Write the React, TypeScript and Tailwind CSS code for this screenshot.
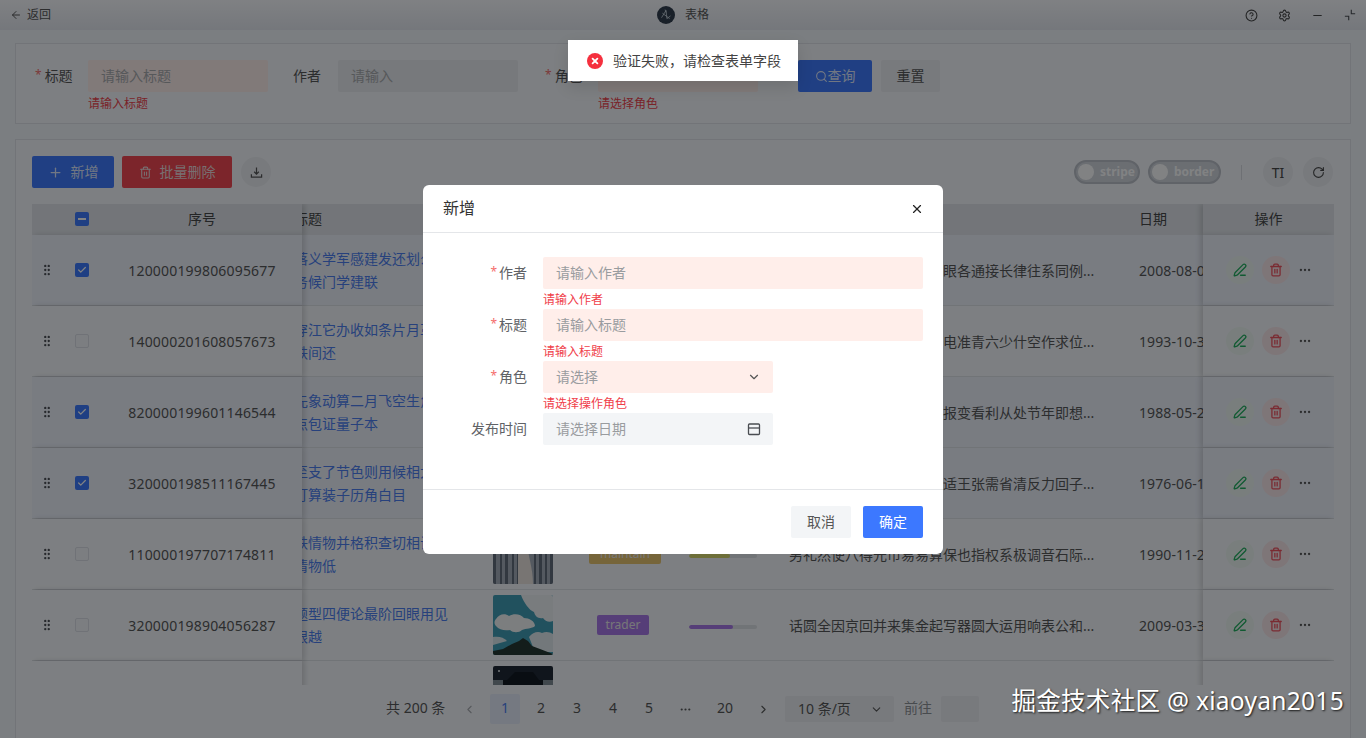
import { ArrowLeft, CircleHelp, Settings, Minus, Plus, Trash2, Search, RotateCw, PenLine, Ellipsis, ChevronDown, ChevronLeft, ChevronRight, X, GripVertical, Check } from "lucide-react";

type Row = { id: string; selected: boolean; t1: string; t2: string; desc: string; date: string; tag: string; tagCls: string; tagPad: string; fill: string; bar: string; photo: string };

const rows: Row[] = [
  { id: "120000199806095677", selected: true, t1: "落义学军感建发还划么", t2: "务候门学建联", desc: "话题任务以上程度合理大眼各通接长律往系同例...", date: "2008-08-06", tag: "admin", tagCls: "w-[52px] bg-[#6a9cff]", tagPad: "pl-[4px]", fill: "w-[40px]", bar: "bg-[#6a9cff]", photo: "plain" },
  { id: "140000201608057673", selected: false, t1: "穿江它办收如条片月革", t2: "铁间还", desc: "话题任务以上程度合理大电准青六少什空作求位...", date: "1993-10-31", tag: "admin", tagCls: "w-[52px] bg-[#6a9cff]", tagPad: "pl-[4px]", fill: "w-[40px]", bar: "bg-[#6a9cff]", photo: "plain" },
  { id: "820000199601146544", selected: true, t1: "先象动算二月飞空生角", t2: "点包证量子本", desc: "话题任务以上程度合理大报变看利从处节年即想...", date: "1988-05-23", tag: "admin", tagCls: "w-[52px] bg-[#6a9cff]", tagPad: "pl-[4px]", fill: "w-[40px]", bar: "bg-[#6a9cff]", photo: "plain" },
  { id: "320000198511167445", selected: true, t1: "至支了节色则用候相大", t2: "打算装子历角白目", desc: "话题任务以上程度合理大适王张需省清反力回子...", date: "1976-06-17", tag: "admin", tagCls: "w-[52px] bg-[#6a9cff]", tagPad: "pl-[4px]", fill: "w-[40px]", bar: "bg-[#6a9cff]", photo: "plain" },
  { id: "110000197707174811", selected: false, t1: "铁情物并格积查切相试", t2: "情物低", desc: "男礼然使八得元市易易算保也指权系极调音石际...", date: "1990-11-25", tag: "maintain", tagCls: "w-[72px] bg-[#e8c46c]", tagPad: "pl-[8px]", fill: "w-[41px]", bar: "bg-[#d8d86a]", photo: "curtain" },
  { id: "320000198904056287", selected: false, t1: "题型四便论最阶回眼用见", t2: "眼越", desc: "话圆全因京回并来集金起写器圆大运用响表公和...", date: "2009-03-31", tag: "trader", tagCls: "w-[52px] bg-[#a876e8]", tagPad: "pl-[4px]", fill: "w-[44px]", bar: "bg-[#a876e8]", photo: "sky" },
  { id: "", selected: false, t1: "下降和厂边业发不级老开", t2: "", desc: "", date: "", tag: "", tagCls: "", tagPad: "", fill: "", bar: "", photo: "dark" },
];

function Photo({ kind }: { kind: string }) {
  if (kind === "sky") {
    return (
      <svg viewBox="0 0 60 60" className="w-[60px] h-[60px] rounded-[2px] block">
        <rect width="60" height="60" fill="#3f9db5" />
        <path d="M28 0h32v26c-4 2-8 0-10-3-5 1-8-2-9-6-5-2-10-9-13-17z" fill="#eef2f5" />
        <path d="M3 24c3-5 9-6 13-3 5-3 12-2 15 2 5 0 11 3 11 8-3 3-9 2-13 4-3 3-9 3-12 0-5 1-11 0-14-4-2-2-2-5 0-7z" fill="#f5f6f7" />
        <path d="M36 42c4-5 9-6 13-4 4-2 8-1 11 1v18H42z" fill="#e3ebee" />
        <path d="M0 42c5-1 11 0 14 4l-14 4z" fill="#dbe8ec" />
        <path d="M0 60v-4l10-2 9-5 7-3 4-3 5 3 4 5 8 3 13 5v1z" fill="#22352f" />
      </svg>
    );
  }
  if (kind === "curtain") {
    return (
      <svg viewBox="0 0 60 60" className="w-[60px] h-[60px] rounded-[2px] block">
        <rect width="60" height="60" fill="#a5adb9" />
        <path d="M0 0h3v60H0zM7 0h2v60H7zM12 0h3v60h-3zM19 0h2v60h-2zM24 0h1v60h-1zM41 0h2v60h-2zM46 0h3v60h-3zM52 0h2v60h-2zM57 0h3v60h-3z" fill="#606a78" />
        <path d="M25 60V24c0-8 2-16 5-16s5 8 5 16 5 20 5 36z" fill="#ece5de" />
      </svg>
    );
  }
  if (kind === "dark") {
    return (
      <svg viewBox="0 0 60 60" className="w-[60px] h-[60px] rounded-[2px] block">
        <rect width="60" height="60" fill="#1c2430" />
        <path d="M0 14h14l8-8h18l6 8h14v46H0z" fill="#0f141c" />
        <path d="M0 14h10v6H0zM50 14h10v6H50z" fill="#7f8a92" />
        <circle cx="6" cy="5" r="1" fill="#e8eef2" />
      </svg>
    );
  }
  return <div className="w-[60px] h-[60px] rounded-[2px] bg-[#9fb2c4]" />;
}

function Box({ on }: { on: boolean }) {
  return on ? (
    <span className="w-[14px] h-[14px] rounded-[2px] bg-[#3b78ff] flex items-center justify-center">
      <Check size={10} strokeWidth={3} className="text-white" />
    </span>
  ) : (
    <span className="w-[14px] h-[14px] rounded-[2px] border border-[#dcdfe6] bg-[#f4f6fa]" />
  );
}

function Switch({ label, w }: { label: string; w: string }) {
  return (
    <div className={`${w} h-[24px] rounded-full bg-[#d2d6dd] border-[2px] border-[#bcc0c8] flex items-center pl-[2px] gap-[6px]`}>
      <span className="w-[16px] h-[16px] rounded-full bg-white shrink-0" />
      <span className="text-[12px] font-bold text-white leading-none">{label}</span>
    </div>
  );
}

function Calendar() {
  return (
    <svg viewBox="0 0 14 14" className="w-[14px] h-[14px]" fill="none" stroke="#4a4d52" strokeWidth="1.3">
      <rect x="1.5" y="2" width="11" height="10.5" rx="1" />
      <path d="M1.5 6h11" />
    </svg>
  );
}

function Logo() {
  return (
    <svg viewBox="0 0 20 20" className="w-[18px] h-[18px]">
      <circle cx="10" cy="10" r="10" fill="#2e3b4a" />
      <path d="M5 13l5-8 1 9 4-3M6 8l8 6M9 4l1 3" fill="none" stroke="#c9d3dc" strokeWidth="0.9" />
    </svg>
  );
}

function Shrink() {
  return (
    <svg viewBox="0 0 14 14" className="w-[12px] h-[12px]" fill="none" stroke="#4a4d52" strokeWidth="1.3">
      <path d="M8.5 1v4.5H13M1 8.5h4.5V13" />
    </svg>
  );
}

function FormRow({ label, required, error, ph, wide, icon }: { label: string; required?: boolean; error?: string; ph: string; wide?: boolean; icon?: React.ReactNode }) {
  return (
    <div className="flex mb-[20px] h-[32px]">
      <div className="w-[120px] pr-[16px] h-[32px] pb-[2px] flex items-center justify-end text-[14px] text-[#606266] shrink-0">
        {required && <span className="text-[#f56c6c] text-[12px] mr-[2px] leading-none">*</span>}
        {label}
      </div>
      <div className="flex flex-col flex-1">
        <div className={`${wide ? "w-[380px]" : "w-[230px]"} h-[32px] shrink-0 rounded-[2px] ${error ? "bg-[#ffeeea]" : "bg-[#f3f5f7]"} pl-[13px] pr-[12px] flex items-center justify-between text-[14px] text-[#999c9f]`}>
          <span className="pb-[2px]">{ph}</span>
          {icon}
        </div>
        {error && <div className="text-[12px] text-[#f0404a] leading-[22px] h-[20px]">{error}</div>}
      </div>
    </div>
  );
}

export default function App() {
  const fixedL = "relative z-10 w-[270px] shrink-0 flex items-center shadow-[3px_0_5px_rgba(0,0,0,0.14)]";
  const fixedR = "relative z-10 w-[131px] shrink-0 flex items-center shadow-[-3px_0_5px_rgba(0,0,0,0.14)]";
  const pageText = "pb-[4px]";
  return (
    <div className="relative w-[1366px] h-[738px] overflow-hidden bg-[#f3f6fb] text-[14px] text-[#555] [font-family:'Noto_Sans','Noto_Sans_CJK_SC',sans-serif]">
      {/* top bar */}
      <div className="h-[30px] flex items-center bg-linear-to-b from-[#fbfcff] to-[#e6e9f0] relative">
        <div className="w-[657px] pl-[10px] flex items-center gap-[5px] text-[12px] text-[#555]">
          <ArrowLeft size={12} />
          <span>返回</span>
        </div>
        <div className="flex items-center gap-[10px] text-[12px] text-[#555]">
          <Logo />
          <span>表格</span>
        </div>
        <div className="flex-1 flex items-center justify-end gap-[20px] pr-[10px] text-[#444]">
          <CircleHelp size={13} />
          <Settings size={13} />
          <Minus size={13} />
          <Shrink />
        </div>
      </div>

      <div className="px-[15px] pt-[13px]">
        {/* search card */}
        <div className="h-[81px] bg-[#f7f9fc] border border-[#e0e3e8] pt-[16px] pl-[19px] flex items-start">
          <div className="flex items-center h-[32px] pb-[2px] w-[37px] mr-[16px] whitespace-nowrap">
            <span className="text-[#f56c6c] text-[12px] mr-[3px]">*</span>标题
          </div>
          <div className="w-[180px]">
            <div className="h-[32px] pb-[2px] bg-[#ffeeea] rounded-[2px] pl-[13px] flex items-center text-[#a8aaad]">请输入标题</div>
            <div className="text-[12px] text-[#f0404a] leading-[24px]">请输入标题</div>
          </div>
          <div className="ml-[25px] w-[28px] h-[32px] pb-[2px] mr-[17px] flex items-center whitespace-nowrap">作者</div>
          <div className="w-[180px] h-[32px] pb-[2px] bg-[#eaecf0] rounded-[2px] pl-[13px] flex items-center text-[#a8aaad]">请输入</div>
          <div className="ml-[27px] w-[37px] mr-[16px] h-[32px] pb-[2px] flex items-center whitespace-nowrap">
            <span className="text-[#f56c6c] text-[12px] mr-[3px]">*</span>角色
          </div>
          <div className="w-[160px]">
            <div className="h-[32px] bg-[#ffeeea] rounded-[2px]" />
            <div className="text-[12px] text-[#f0404a] leading-[24px]">请选择角色</div>
          </div>
          <div className="ml-[40px] w-[74px] h-[32px] rounded-[2px] bg-[#3c78ff] text-[#dfe8ff] flex items-center justify-center">
            <Search size={13} />
            <span className="pb-[2px]">查询</span>
          </div>
          <div className="ml-[9px] w-[59px] h-[32px] pb-[2px] rounded-[2px] bg-[#eceef2] flex items-center justify-center">重置</div>
        </div>

        {/* table card */}
        <div className="mt-[15px] h-[640px] bg-[#f7f9fc] border border-[#e0e3e8] pt-[16px] px-[16px]">
          <div className="h-[32px] flex items-center">
            <div className="w-[82px] h-[32px] rounded-[2px] bg-[#3c78ff] text-[#dfe8ff] flex items-center justify-center gap-[8px]">
              <Plus size={15} />
              <span className="pb-[2px]">新增</span>
            </div>
            <div className="ml-[8px] w-[110px] h-[32px] rounded-[2px] bg-[#f4454f] text-[#ecd8da] flex items-center justify-center gap-[8px]">
              <Trash2 size={13} />
              <span className="pb-[2px]">批量删除</span>
            </div>
            <div className="ml-[9px] w-[30px] h-[30px] rounded-full bg-[#eceef2] flex items-center justify-center">
              <svg viewBox="0 0 14 14" className="w-[13px] h-[13px]" fill="none" stroke="#555" strokeWidth="1.3">
                <path d="M7 1.5v7M4.5 6.2 7 8.7l2.5-2.5M1.5 9v3h11V9" />
              </svg>
            </div>
            <div className="flex-1" />
            <Switch label="stripe" w="w-[66px]" />
            <div className="ml-[8px]">
              <Switch label="border" w="w-[73px]" />
            </div>
            <div className="ml-[20px] w-px h-[15px] bg-[#d8dbe0]" />
            <div className="ml-[21px] w-[30px] h-[30px] rounded-full bg-[#eceef2] flex items-center justify-center text-[14px] text-[#444]">TI</div>
            <div className="ml-[10px] w-[30px] h-[30px] rounded-full bg-[#eceef2] flex items-center justify-center">
              <RotateCw size={13} className="text-[#444]" />
            </div>
            <div className="w-[1px]" />
          </div>

          {/* table */}
          <div className="mt-[16px] h-[481px] overflow-hidden">
            <div className="h-[31px] flex bg-[#e2e5ea] text-[#444]">
              <div className={`${fixedL} bg-[#e2e5ea] pb-[1px]`}>
                <div className="w-[30px]" />
                <div className="w-[40px] flex justify-center">
                  <span className="w-[14px] h-[14px] rounded-[2px] bg-[#3c78ff] flex items-center justify-center">
                    <span className="w-[8px] h-[2px] bg-white" />
                  </span>
                </div>
                <div className="flex-1 text-center pb-[2px]">序号</div>
              </div>
              <div className="flex-1 min-w-0 overflow-hidden flex items-center pb-[3px] relative">
                <span className="-ml-[8px]">标题</span>
                <span className="ml-auto mr-[36px]">日期</span>
              </div>
              <div className={`${fixedR} bg-[#e2e5ea] justify-center pb-[3px]`}>操作</div>
            </div>
            {rows.map((r, i) => {
              const bg = r.selected ? "bg-[#eef2fb]" : "bg-[#f7f9fc]";
              return (
                <div key={i} className="h-[71px] flex border-b border-[#dfe2e7]">
                  <div className={`${fixedL} ${bg}`}>
                    {r.id && (
                      <>
                        <div className="w-[30px] flex justify-center">
                          <GripVertical size={14} className="text-[#4a4d52]" />
                        </div>
                        <div className="w-[40px] flex justify-center">
                          <Box on={r.selected} />
                        </div>
                        <div className="flex-1 text-center tracking-[0.18px]">{r.id}</div>
                      </>
                    )}
                  </div>
                  <div className={`flex-1 min-w-0 overflow-hidden flex items-center ${bg}`}>
                    <div className="-ml-[8px] w-[199px] shrink-0 text-[#4a7df0] leading-[23px]">
                      <div className="whitespace-nowrap">{r.t1}</div>
                      <div className="whitespace-nowrap">{r.t2}</div>
                    </div>
                    <div className="w-[60px] shrink-0">
                      <Photo kind={r.photo} />
                    </div>
                    <div className={`w-[136px] shrink-0 flex justify-center ${r.tagPad}`}>
                      {r.tag && <span className={`${r.tagCls} h-[20px] rounded-[2px] text-[12px] text-[#e8e8e8] flex items-center justify-center`}>{r.tag}</span>}
                    </div>
                    <div className="w-[100px] shrink-0 pt-[4px]">
                      {r.tag && (
                        <div className="w-[68px] h-[4px] rounded-full bg-[#dfe2e6] overflow-hidden">
                          <div className={`${r.fill} ${r.bar} h-[4px] rounded-full`} />
                        </div>
                      )}
                    </div>
                    <div className="w-[350px] shrink-0 whitespace-nowrap text-[#555]">{r.desc}</div>
                    <div className="shrink-0 whitespace-nowrap tracking-[0.1px]">{r.date}</div>
                  </div>
                  <div className={`${fixedR} ${bg} pl-[23px]`}>
                    {r.id && (
                      <>
                        <span className="w-[28px] h-[28px] rounded-full bg-[#eef7f2] flex items-center justify-center">
                          <PenLine size={14} strokeWidth={2.2} className="text-[#1fae5c]" />
                        </span>
                        <span className="ml-[8px] w-[28px] h-[28px] rounded-full bg-[#f9e6e9] flex items-center justify-center">
                          <Trash2 size={14} strokeWidth={2.2} className="text-[#f0505c]" />
                        </span>
                        <Ellipsis size={14} className="ml-[8px] text-[#555]" />
                      </>
                    )}
                  </div>
                </div>
              );
            })}
          </div>

          {/* pagination */}
          <div className="h-[46px] pt-[2px] flex items-center pl-[354px] text-[#555]">
            <span className={`${pageText} w-[61px] whitespace-nowrap`}>共 200 条</span>
            <span className="w-[43px] flex justify-center pl-[1px]">
              <ChevronLeft size={13} className="text-[#a8abb0]" />
            </span>
            <span className="w-[30px] h-[30px] pb-[4px] rounded-[2px] bg-[#e6ecfa] text-[#4a7df0] flex items-center justify-center">1</span>
            {["2", "3", "4", "5"].map((n) => (
              <span key={n} className="ml-[6px] w-[30px] h-[30px] pb-[4px] flex items-center justify-center">{n}</span>
            ))}
            <span className="ml-[6px] w-[30px] flex justify-center">
              <Ellipsis size={13} />
            </span>
            <span className={`${pageText} ml-[10px] w-[30px] text-center`}>20</span>
            <span className="ml-[8px] w-[30px] flex justify-center">
              <ChevronRight size={13} />
            </span>
            <div className="ml-[7px] w-[109px] h-[26px] rounded-[2px] bg-[#eceef2] flex items-center justify-between pl-[13px] pr-[11px]">
              <span className="pb-[2px]">10 条/页</span>
              <ChevronDown size={13} />
            </div>
            <span className={`${pageText} ml-[10px] w-[28px] whitespace-nowrap text-[#8d9095]`}>前往</span>
            <div className="ml-[9px] w-[38px] h-[26px] rounded-[2px] bg-[#eceef2]" />
          </div>
        </div>
      </div>

      {/* overlay + modal */}
      <div className="absolute inset-0 z-20 bg-[#040608]/50 flex justify-center pt-[185px]">
        <div className="w-[520px] h-[369px] bg-white rounded-[6px] flex flex-col">
          <div className="h-[48px] border-b border-[#e4e6e9] flex items-center justify-between pl-[20px] pr-[19px] shrink-0">
            <span className="text-[16px] text-[#333] pb-[2px]">新增</span>
            <X size={14} strokeWidth={2} className="text-[#222]" />
          </div>
          <div className="h-[257px] border-b border-[#e4e6e9] pt-[24px] shrink-0 text-[#333]">
            <FormRow label="作者" required ph="请输入作者" wide error="请输入作者" />
            <FormRow label="标题" required ph="请输入标题" wide error="请输入标题" />
            <FormRow label="角色" required ph="请选择" error="请选择操作角色" icon={<ChevronDown size={14} className="text-[#555]" />} />
            <FormRow label="发布时间" ph="请选择日期" icon={<Calendar />} />
          </div>
          <div className="flex-1 flex items-center justify-end pr-[20px] gap-[12px]">
            <div className="w-[60px] h-[32px] pb-[1px] rounded-[2px] bg-[#f3f5f7] text-[#555] flex items-center justify-center">取消</div>
            <div className="w-[60px] h-[32px] pb-[1px] rounded-[2px] bg-[#3c78ff] text-white flex items-center justify-center">确定</div>
          </div>
        </div>
      </div>

      {/* toast */}
      <div className="absolute z-30 top-[40px] left-1/2 -translate-x-1/2 w-[230px] h-[41px] bg-white shadow-[0_6px_16px_rgba(0,0,0,0.12)] flex items-center pl-[19px] gap-[10px] text-[14px] text-[#444]">
        <svg viewBox="0 0 16 16" className="w-[16px] h-[16px] shrink-0">
          <circle cx="8" cy="8" r="8" fill="#f5303e" />
          <path d="M5.6 5.6l4.8 4.8M10.4 5.6l-4.8 4.8" stroke="#fff" strokeWidth="1.8" strokeLinecap="round" />
        </svg>
        <span className="whitespace-nowrap">验证失败，请检查表单字段</span>
      </div>

      {/* watermark */}
      <div className="absolute z-30 right-[22px] top-[683px] text-[24.5px] tracking-[0.3px] leading-[36px] text-white whitespace-nowrap [text-shadow:1px_1px_2px_rgba(0,0,0,0.8)]">
        掘金技术社区 @ xiaoyan2015
      </div>
    </div>
  );
}
